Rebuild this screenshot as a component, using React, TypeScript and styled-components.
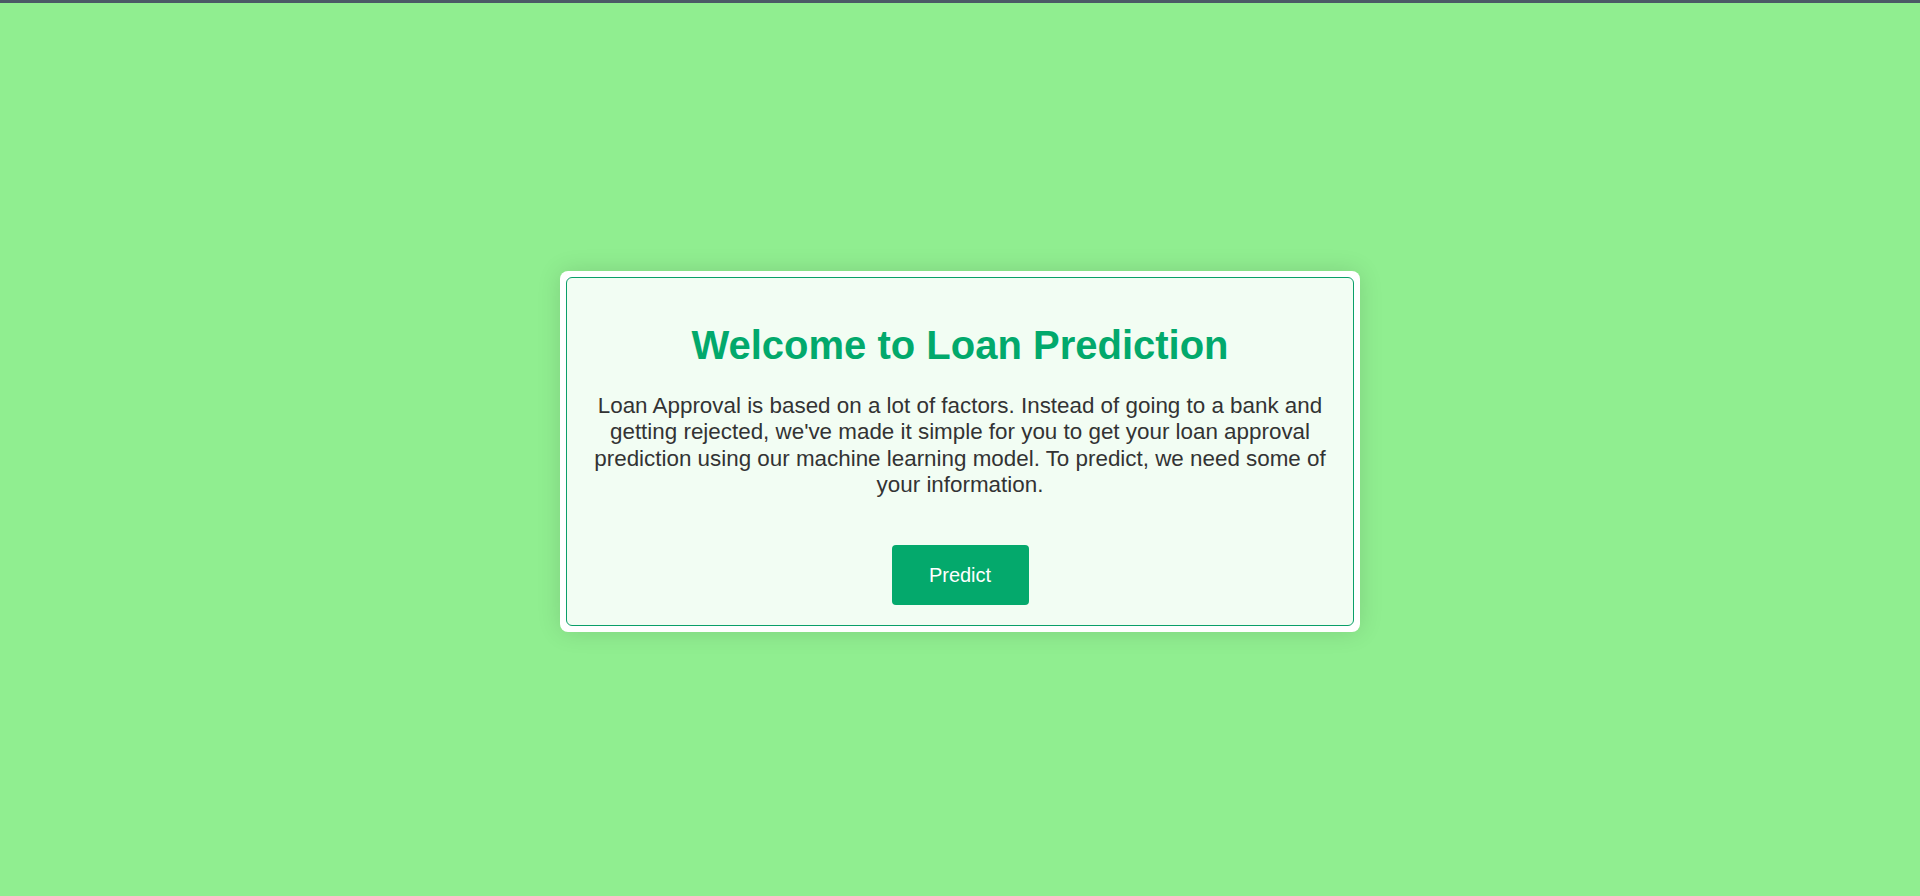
import styled, { createGlobalStyle } from "styled-components";

const GlobalStyle = createGlobalStyle`
  html, body {
    margin: 0;
    padding: 0;
  }

  body {
    font-family: "Liberation Sans", Arial, sans-serif;
    background-color: #90ee90;
  }

  * {
    box-sizing: border-box;
  }
`;

const Page = styled.div`
  min-height: 100vh;
  border-top: 3px solid #4b5a66;
  padding-top: 4px;
  display: flex;
  align-items: center;
  justify-content: center;
`;

const Card = styled.div`
  width: 800px;
  padding: 6px;
  background-color: #ffffff;
  border-radius: 8px;
  box-shadow: 0 0 24px rgba(0, 0, 0, 0.12);
`;

const Inner = styled.div`
  border: 1px solid #0a9f69;
  border-radius: 6px;
  background-color: #f2fdf3;
  padding: 20px;
  display: flex;
  flex-direction: column;
  align-items: center;
  text-align: center;
`;

const Title = styled.h1`
  margin: 25px 0 25px;
  font-size: 40px;
  font-weight: bold;
  color: #02a96c;
`;

const Intro = styled.p`
  margin: 0 0 47px;
  font-size: 22.4px;
  line-height: 26.4px;
  color: #333333;
`;

const PredictButton = styled.button`
  width: 137px;
  height: 60px;
  border: none;
  border-radius: 4px;
  background-color: #04a96c;
  color: #ffffff;
  font-family: "Liberation Sans", Arial, sans-serif;
  font-size: 20px;
  cursor: pointer;

  &:hover {
    background-color: #009660;
  }
`;

const App = () => {
  return (
    <>
      <GlobalStyle />
      <Page>
        <Card>
          <Inner>
            <Title>Welcome to Loan Prediction</Title>
            <Intro>
              Loan Approval is based on a lot of factors. Instead of going to a
              bank and getting rejected, we've made it simple for you to get
              your loan approval prediction using our machine learning model. To
              predict, we need some of your information.
            </Intro>
            <PredictButton>Predict</PredictButton>
          </Inner>
        </Card>
      </Page>
    </>
  );
};

export default App;
